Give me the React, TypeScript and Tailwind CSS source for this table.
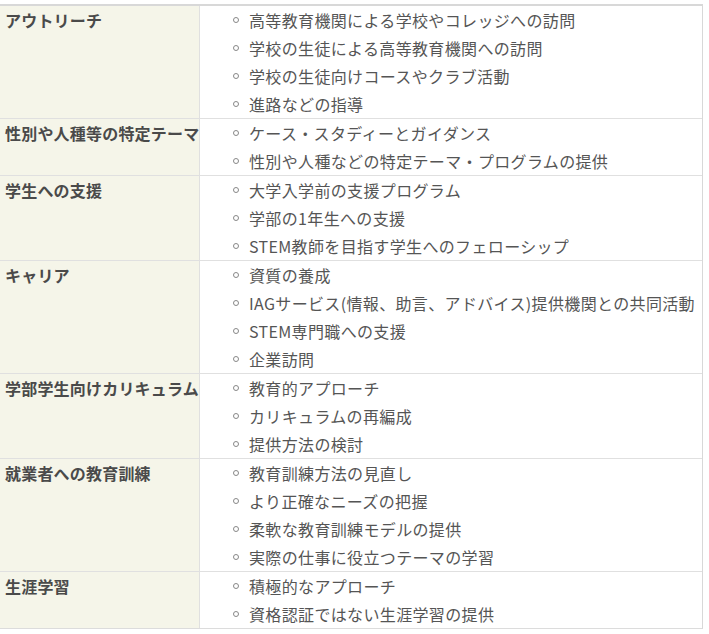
const rows: { label: string; items: string[] }[] = [
  {
    label: "アウトリーチ",
    items: [
      "高等教育機関による学校やコレッジへの訪問",
      "学校の生徒による高等教育機関への訪問",
      "学校の生徒向けコースやクラブ活動",
      "進路などの指導",
    ],
  },
  {
    label: "性別や人種等の特定テーマ",
    items: ["ケース・スタディーとガイダンス", "性別や人種などの特定テーマ・プログラムの提供"],
  },
  {
    label: "学生への支援",
    items: ["大学入学前の支援プログラム", "学部の1年生への支援", "STEM教師を目指す学生へのフェローシップ"],
  },
  {
    label: "キャリア",
    items: [
      "資質の養成",
      "IAGサービス(情報、助言、アドバイス)提供機関との共同活動",
      "STEM専門職への支援",
      "企業訪問",
    ],
  },
  {
    label: "学部学生向けカリキュラム",
    items: ["教育的アプローチ", "カリキュラムの再編成", "提供方法の検討"],
  },
  {
    label: "就業者への教育訓練",
    items: [
      "教育訓練方法の見直し",
      "より正確なニーズの把握",
      "柔軟な教育訓練モデルの提供",
      "実際の仕事に役立つテーマの学習",
    ],
  },
  {
    label: "生涯学習",
    items: ["積極的なアプローチ", "資格認証ではない生涯学習の提供"],
  },
];

export default function App() {
  return (
    <div className="w-[709px] h-[634px] bg-white pt-[4px] overflow-hidden font-['Meiryo','Noto_Sans_CJK_JP',sans-serif] text-[16px]">
      <div className="w-[703px] border-t-2 border-t-[#d8d8d8] border-r border-r-[#d8d8d8] border-b border-b-[#dcdcdc]">
        {rows.map((row, i) => (
          <div
            key={i}
            className={`flex ${i > 0 ? "border-t border-[#e0e0e0]" : ""}`}
          >
            <div className="w-[200px] shrink-0 bg-[#f5f5e9] border-r border-[#e0e0e0] pl-[5px] leading-[28px] font-bold tracking-[0.2px] text-[#4a4a4a] whitespace-nowrap">
              {row.label}
            </div>
            <ul className="flex-1 min-w-0 overflow-hidden">
              {row.items.map((item, j) => (
                <li key={j} className="flex items-center h-[28px] pl-[33px] text-[#555] whitespace-nowrap">
                  <span className="w-[6px] h-[6px] shrink-0 rounded-full border border-[#888] mr-[10px]" />
                  <span className="leading-[28px] tracking-[0.35px]">{item}</span>
                </li>
              ))}
            </ul>
          </div>
        ))}
      </div>
    </div>
  );
}
